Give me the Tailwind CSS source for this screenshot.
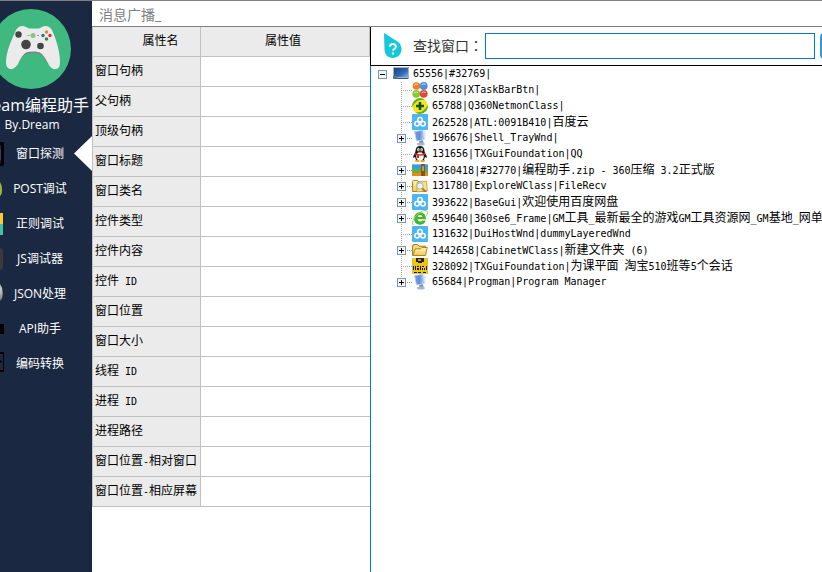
<!DOCTYPE html>
<html lang="zh-CN">
<head>
<meta charset="utf-8">
<meta name="viewport" content="width=device-width, initial-scale=1">
<title>Dream编程助手</title>
<script src="https://cdn.jsdelivr.net/npm/@tailwindcss/browser@4"></script>
</head>
<body class="flex h-screen flex-col overflow-hidden border-t border-[#808080] bg-white font-['Open_Sans','Noto_Sans_CJK_SC',sans-serif] text-black">

<svg class="absolute size-0" aria-hidden="true">
  <defs>
    <linearGradient id="gBlue" x1="0" y1="0" x2="1" y2="1"><stop offset="0" stop-color="#1c3f78"/><stop offset=".6" stop-color="#3468b4"/><stop offset="1" stop-color="#7fb4ea"/></linearGradient>
    <linearGradient id="gPc" x1="0" y1="0" x2="1" y2="0"><stop offset="0" stop-color="#7f9be0"/><stop offset=".5" stop-color="#5f8fe0"/><stop offset="1" stop-color="#b9e0fc"/></linearGradient>
    <linearGradient id="gFold" x1="0" y1="0" x2="0" y2="1"><stop offset="0" stop-color="#fff6c0"/><stop offset="1" stop-color="#f0c850"/></linearGradient>
    <radialGradient id="gBall" cx=".3" cy=".3" r=".8"><stop offset="0" stop-color="#ddd"/><stop offset="1" stop-color="#666"/></radialGradient>
    <symbol id="desktop" viewBox="0 0 16 16"><rect x="0" y="1" width="16" height="12" fill="#9db4cf"/><rect x="1" y="2" width="14" height="9" fill="url(#gBlue)"/><path d="M1 12h14v1H1z" fill="#31557f"/><path d="M0 10h4l1 3H0z" fill="#56768f"/></symbol>
    <symbol id="task" viewBox="0 0 16 16"><circle cx="4.500" cy="4" r="3.800" fill="#ef7d22"/><circle cx="11.700" cy="4" r="3.900" fill="#4c8fe0"/><circle cx="4.300" cy="11.800" r="3.900" fill="#86c832"/><circle cx="11.700" cy="11.800" r="3.900" fill="#e2463a"/><path d="M2 3.500q2-2.500 4-1M9.500 3q2-2 4-.5M2 11q2-2 4-.5M9.500 11q2-2 4-.5" stroke="#fff" stroke-opacity=".7" fill="none"/></symbol>
    <symbol id="plus360" viewBox="0 0 16 16"><circle cx="8" cy="8" r="7.800" fill="#f4e51c"/><path d="M.3 9A7.800 7.800 0 0 1 13 2Q5 0 .3 9zM15.700 7A7.800 7.800 0 0 1 3 14Q11 16 15.700 7z" fill="#55b526"/><path d="M6.700 4h2.600v2.700H12v2.600H9.300V12H6.700V9.300H4V6.700h2.700z" fill="#15551a"/></symbol>
    <symbol id="cloud" viewBox="0 0 16 16"><rect width="16" height="16" rx="1" fill="#4eb5f5"/><g fill="none" stroke="#fff" stroke-width="1.500"><circle cx="8" cy="5.800" r="2.200"/><circle cx="5" cy="9.800" r="2.200"/><circle cx="11" cy="9.800" r="2.200"/></g></symbol>
    <symbol id="computer" viewBox="0 0 16 16"><path d="M2.500 1.500L11 .3l1.500 9.200L4.500 11z" fill="url(#gPc)" stroke="#c5cfe8" stroke-width=".8"/><path d="M11.500.5l2 .8.300 7.700-1.300.8z" fill="#dfe5f2"/><path d="M7 11l4-.8.5 3-4 .6z" fill="#7d90b8"/><ellipse cx="8.800" cy="14" rx="4" ry="1.500" fill="#aab5cc"/></symbol>
    <symbol id="qq" viewBox="0 0 16 16"><path d="M8 0c3 0 4.500 2 4.500 5 0 2 2.500 4 2.500 7l-2-1-1 3H4l-1-3-2 1c0-3 2.500-5 2.500-7C3.500 2 5 0 8 0z" fill="#16181d"/><ellipse cx="8" cy="10.500" rx="3.700" ry="4" fill="#fff"/><ellipse cx="6.400" cy="3.500" rx="1.200" ry="1.600" fill="#fff"/><ellipse cx="9.600" cy="3.500" rx="1.200" ry="1.600" fill="#fff"/><circle cx="6.700" cy="3.700" r=".5"/><circle cx="9.300" cy="3.700" r=".5"/><path d="M5 5.800h6L8 7.300z" fill="#f6a21b"/><path d="M3 7q5 2.500 10 0v1.800q-3 1-6 .8V12H5V9.300L3 8.800z" fill="#e02a20"/><path d="M3 14.300q2.500-1.300 4.500 0L7 16H3.500zM8.500 14.300q2-1.300 4.500 0l-.5 1.700H9z" fill="#f3a01c"/></symbol>
    <symbol id="zip" viewBox="0 0 16 16"><path d="M0 2h16v6H0z" fill="#3a9be0"/><path d="M0 2h16v1H0z" fill="#74c2f0"/><path d="M0 7q6 0 9 1h7v4H0z" fill="#63b52e"/><path d="M0 11h16v3H0z" fill="#f08519"/><path d="M9 2h4v12H9z" fill="#8d5023"/><path d="M10.500 4h1v5h-1z" fill="#f6d77e"/></symbol>
    <symbol id="search" viewBox="0 0 16 16"><path d="M.6 13.500V3.500q0-1 1-1h4.200l1 1.500h7.600v9.500z" fill="url(#gFold)" stroke="#b3811d"/><path d="M5 4.500l9.500-1.500.9 9.500L5 14z" fill="#fbe28a" stroke="#c2962c" stroke-width=".7"/><circle cx="8" cy="8" r="3.200" fill="#e6f4fb" stroke="#a0b2bd"/><path d="M10.300 10.300l3.200 3.400" stroke="#b0702a" stroke-width="1.800"/></symbol>
    <symbol id="ie" viewBox="0 0 16 16"><path fill-rule="evenodd" d="M14 9.300H5.500q.3 2.200 2.600 2.200 1.500 0 2.200-1h3.400Q12.300 14.800 8 14.800 2.200 14.500 2 8.600 2.300 2.600 8 2.300q6 .3 6 7zM5.600 7.100h5q-.4-2-2.500-2-2 0-2.500 2z" fill="#45b52c"/><path d="M1 15Q-1 11 5 5t10-4q1.500 1-.5 4.500" fill="none" stroke="#8ad66c" stroke-width="1"/></symbol>
    <symbol id="folder" viewBox="0 0 16 16"><path d="M.6 13.400V4q0-1.400 1.400-1.400h3.500L7 4.200h6.500V7" fill="#f5d97a" stroke="#a67c14"/><path d="M.8 13.500L3.300 6.800H8.500l1.300-1.300h5.500l-1.800 8z" fill="url(#gFold)" stroke="#a67c14" stroke-width=".9"/></symbol>
    <symbol id="course" viewBox="0 0 16 16"><rect width="16" height="16" fill="#eac51a"/><path d="M4 0h8v4h-2v1H6V4H4z" fill="#2b2408"/><path d="M6 1h3v2H6z" fill="#b89b18"/><path d="M1 8h1v4H1zM3 8h1v4H3zM5 8h2v1H5zM5 10h2v2H5zM8 8h1v4H8zM10 8h2v1h-2zM10 10h1v2h-1zM12 10h1v2h-1zM14 8h1v4h-1zM2 14h3v1H2zM6 14h3v1H6zM11 14h3v1h-3z" fill="#181507"/></symbol>
    <symbol id="boxPlus" viewBox="0 0 9 9"><rect x=".5" y=".5" width="8" height="8" fill="#f5f5f3" stroke="#7b95b5"/><path d="M2 4h5v1H2zM4 2h1v5H4z" fill="#000"/></symbol>
    <symbol id="boxMinus" viewBox="0 0 9 9"><rect x=".5" y=".5" width="8" height="8" fill="#f5f5f3" stroke="#7b95b5"/><path d="M2 4h5v1H2z" fill="#000"/></symbol>
    <symbol id="branch" viewBox="0 0 15 16"><path d="M4.500 0v16M4 8.500h11" stroke="#a0a0a0" stroke-dasharray="1 1"/></symbol>
    <symbol id="branchPlus" viewBox="0 0 15 16"><path d="M4.500 0v16M4 8.500h11" stroke="#a0a0a0" stroke-dasharray="1 1"/><use href="#boxPlus" y="4" width="9" height="9"/></symbol>
    <symbol id="branchEnd" viewBox="0 0 15 16"><path d="M4.500 0v8M4 8.500h11" stroke="#a0a0a0" stroke-dasharray="1 1"/><use href="#boxPlus" y="4" width="9" height="9"/></symbol>
  </defs>
</svg>

<div class="flex min-h-0 flex-1">

  <aside class="w-[92px] shrink-0 overflow-hidden bg-[#1a2941] text-white">
    <svg class="-ml-[9px] mt-2 size-20" viewBox="0 0 80 80" role="img" aria-label="手柄">
      <circle cx="40" cy="40" r="40" fill="#3fb97f"/>
      <path d="M27 50Q31 43 35 41.500q7-2 14 0Q53 43 57 50v5Q53 47 49 45q-7-2-14 0-4 2-8 10z" fill="#7d7f80"/>
      <path d="M25 21Q29 15 35 18l3 1.500h10l3-1.500Q57 15 61 21C65 30 69 42 69 53q0 7-4 7-4 1-7-4-5-10-9-12.500-7-2-14 0-4 2.500-8 11.500-4 6-8 5-4-1-4-7C15 42 21 30 25 21z" fill="#ebebeb"/>
      <circle cx="27.500" cy="25.500" r="3.200" fill="#444"/><circle cx="35" cy="35.500" r="4.800" fill="#444"/><circle cx="49.500" cy="37" r="3.300" fill="#444"/>
      <circle cx="42" cy="26.500" r="2.500" fill="#94bd8c"/><path d="M36.500 26h2v1h-2zM46 26h2v1h-2z" fill="#999"/>
      <circle cx="55.500" cy="23" r="1.700" fill="#d98a28"/><circle cx="52" cy="26.500" r="1.700" fill="#2d6e94"/><circle cx="59" cy="26.500" r="1.700" fill="#c93333"/><circle cx="55.500" cy="30" r="1.700" fill="#3a7d3c"/>
    </svg>
    <h1 class="mt-1 flex justify-end pr-[3px] text-[16px] leading-[24px] whitespace-nowrap">Dream编程助手</h1>
    <p class="pr-7 text-center text-[12px] leading-[16px]">By.Dream</p>

    <nav class="mt-[3px] text-[12px]">
      <button class="relative flex h-[35px] w-full items-center">
        <svg class="h-6 w-1" viewBox="0 0 4 24"><path d="M0 0h2q2 0 2 2v20q0 2-2 2H0v-3h1V3H0z" fill="#000"/><path d="M0 7h1v11H0z" fill="#27446e"/></svg>
        <span class="flex-1 pr-4">窗口探测</span>
        <svg class="absolute right-0 top-0 h-[35px] w-[18px]" viewBox="0 0 18 35"><path d="M18 0v35L0 17.500z" fill="#fff"/></svg>
      </button>
      <button class="flex h-[35px] w-full items-center">
        <svg class="h-6 w-1" viewBox="0 0 4 24"><path d="M0 5q2 3 2 8t-2 6z" fill="#9db63c"/></svg>
        <span class="flex-1 pr-4">POST调试</span>
      </button>
      <button class="flex h-[35px] w-full items-center">
        <svg class="h-6 w-1" viewBox="0 0 4 24"><path d="M0 1h3v11H0z" fill="#fccb33"/><path d="M0 12h3v11H0z" fill="#3cc4a4"/></svg>
        <span class="flex-1 pr-4">正则调试</span>
      </button>
      <button class="flex h-[35px] w-full items-center">
        <svg class="h-6 w-1" viewBox="0 0 4 24"><path d="M0 1q3 0 3 3v16q0 3-3 3z" fill="#3a3a3a"/></svg>
        <span class="flex-1 pr-4">JS调试器</span>
      </button>
      <button class="flex h-[35px] w-full items-center">
        <svg class="h-6 w-1" viewBox="0 0 4 24"><path d="M0 2q3 4 3 9t-3 8z" fill="url(#gBall)"/></svg>
        <span class="flex-1 pr-4">JSON处理</span>
      </button>
      <button class="flex h-[35px] w-full items-center">
        <svg class="h-6 w-1" viewBox="0 0 4 24"><path d="M0 7h4v10H0z" fill="#000"/></svg>
        <span class="flex-1 pr-4">API助手</span>
      </button>
      <button class="flex h-[35px] w-full items-center">
        <svg class="h-6 w-1" viewBox="0 0 4 24"><path d="M0 0h4v20H0v-2h3V2H0zM0 8l2 1.500L0 11z" fill="#000"/></svg>
        <span class="flex-1 pr-4">编码转换</span>
      </button>
    </nav>
  </aside>

  <main class="flex min-w-0 flex-1 flex-col">
    <header class="h-[26px] shrink-0 border-b border-[#808080] pl-[7px] text-[14px] leading-[27px] text-[#808080]">消息广播_</header>

    <div class="flex min-h-0 flex-1">
      <section class="w-[278px] shrink-0">
        <table class="w-full table-fixed border-separate border-spacing-0 border-l border-[#c0c0c0] text-left text-[12px] leading-[16px] [&_th]:h-[30px] [&_th]:border-r [&_th]:border-b [&_th]:border-[#c0c0c0] [&_th]:bg-[#ebebeb] [&_th]:p-0 [&_th]:pb-[2px] [&_th]:pl-[2px] [&_th]:font-normal [&_td]:border-b [&_td]:border-[#c0c0c0] [&_i]:font-['DejaVu_Sans_Mono',monospace] [&_i]:text-[10px] [&_i]:leading-none [&_i]:not-italic">
          <colgroup><col class="w-[108px]"><col></colgroup>
          <thead>
            <tr><th scope="col"><div class="pl-[26px] text-center">属性名</div></th><th scope="col"><div class="pr-[6px] text-center">属性值</div></th></tr>
          </thead>
          <tbody>
            <tr><th scope="row">窗口句柄</th><td></td></tr>
            <tr><th scope="row">父句柄</th><td></td></tr>
            <tr><th scope="row">顶级句柄</th><td></td></tr>
            <tr><th scope="row">窗口标题</th><td></td></tr>
            <tr><th scope="row">窗口类名</th><td></td></tr>
            <tr><th scope="row">控件类型</th><td></td></tr>
            <tr><th scope="row">控件内容</th><td></td></tr>
            <tr><th scope="row">控件<i> ID</i></th><td></td></tr>
            <tr><th scope="row">窗口位置</th><td></td></tr>
            <tr><th scope="row">窗口大小</th><td></td></tr>
            <tr><th scope="row">线程<i> ID</i></th><td></td></tr>
            <tr><th scope="row">进程<i> ID</i></th><td></td></tr>
            <tr><th scope="row">进程路径</th><td></td></tr>
            <tr><th scope="row">窗口位置<i>-</i>相对窗口</th><td></td></tr>
            <tr><th scope="row">窗口位置<i>-</i>相应屏幕</th><td></td></tr>
          </tbody>
        </table>
      </section>

      <section class="flex min-w-0 flex-1 flex-col">
        <form class="flex h-[39px] shrink-0 items-center overflow-hidden border-b border-l border-black pl-3">
          <svg class="h-[26px] w-[19px] shrink-0" viewBox="0 0 19 26"><path d="M1 0L14.500 8.500Q19 12 18.500 17 17.500 24.500 10 25 2.500 25 1.500 17z" fill="#12c8da"/><path d="M6.800 13.800q.2-2.800 3.100-2.800t3 2.600q0 1.400-1.500 2.200-1.300.7-1.300 2" fill="none" stroke="#fff" stroke-width="1.900"/><circle cx="10" cy="20.500" r="1.200" fill="#fff"/></svg>
          <label for="find" class="ml-[11px] shrink-0 pb-[2px] text-[14px] leading-[20px] text-[#333]">查找窗口<span lang="zh-TW" class="font-['Noto_Sans_CJK_TC',sans-serif]">：</span></label>
          <input id="find" type="text" class="ml-[2px] h-[26px] min-w-0 flex-1 border border-[#0078d7] bg-white px-1 text-[14px] outline-none">
          <button type="button" aria-label="查找" class="-mr-[58px] ml-[5px] h-[26px] w-[60px] shrink-0 rounded-sm bg-[#3498db]"></button>
        </form>

        <div class="min-h-0 flex-1 overflow-hidden border-l border-[#0078d7] pl-[7px] font-['DejaVu_Sans_Mono','Noto_Sans_CJK_SC',monospace] text-[10px] leading-[16px] whitespace-nowrap [&_b]:font-['Noto_Sans_CJK_SC',sans-serif] [&_b]:text-[12px] [&_b]:font-normal">
          <div class="flex h-4 items-center"><button aria-label="收起" class="size-[9px]"><svg class="size-[9px]"><use href="#boxMinus"/></svg></button><svg class="ml-[6px] mr-1 size-4"><use href="#desktop"/></svg><span>65556|#32769|</span></div>
          <ul class="ml-[19px] [&>li]:flex [&>li]:h-4 [&>li]:items-center [&_svg]:shrink-0">
            <li><svg class="h-4 w-[15px]"><use href="#branch"/></svg><svg class="mr-1 size-4"><use href="#task"/></svg><span>65828|XTaskBarBtn|</span></li>
            <li><svg class="h-4 w-[15px]"><use href="#branch"/></svg><svg class="mr-1 size-4"><use href="#plus360"/></svg><span>65788|Q360NetmonClass|</span></li>
            <li><svg class="h-4 w-[15px]"><use href="#branch"/></svg><svg class="mr-1 size-4"><use href="#cloud"/></svg><span>262528|ATL:0091B410|<b>百度云</b></span></li>
            <li><button aria-label="展开"><svg class="h-4 w-[15px]"><use href="#branchPlus"/></svg></button><svg class="mr-1 size-4"><use href="#computer"/></svg><span>196676|Shell_TrayWnd|</span></li>
            <li><svg class="h-4 w-[15px]"><use href="#branch"/></svg><svg class="mr-1 size-4"><use href="#qq"/></svg><span>131656|TXGuiFoundation|QQ</span></li>
            <li><button aria-label="展开"><svg class="h-4 w-[15px]"><use href="#branchPlus"/></svg></button><svg class="mr-1 size-4"><use href="#zip"/></svg><span>2360418|#32770|<b>编程助手</b>.zip - 360<b>压缩</b> 3.2<b>正式版</b></span></li>
            <li><button aria-label="展开"><svg class="h-4 w-[15px]"><use href="#branchPlus"/></svg></button><svg class="mr-1 size-4"><use href="#search"/></svg><span>131780|ExploreWClass|FileRecv</span></li>
            <li><button aria-label="展开"><svg class="h-4 w-[15px]"><use href="#branchPlus"/></svg></button><svg class="mr-1 size-4"><use href="#cloud"/></svg><span>393622|BaseGui|<b>欢迎使用百度网盘</b></span></li>
            <li><button aria-label="展开"><svg class="h-4 w-[15px]"><use href="#branchPlus"/></svg></button><svg class="mr-1 size-4"><use href="#ie"/></svg><span>459640|360se6_Frame|GM<b>工具</b>_<b>最新最全的游戏</b>GM<b>工具资源网</b>_GM<b>基地</b>_<b>网单</b></span></li>
            <li><svg class="h-4 w-[15px]"><use href="#branch"/></svg><svg class="mr-1 size-4"><use href="#cloud"/></svg><span>131632|DuiHostWnd|dummyLayeredWnd</span></li>
            <li><button aria-label="展开"><svg class="h-4 w-[15px]"><use href="#branchPlus"/></svg></button><svg class="mr-1 size-4"><use href="#folder"/></svg><span>1442658|CabinetWClass|<b>新建文件夹</b> (6)</span></li>
            <li><svg class="h-4 w-[15px]"><use href="#branch"/></svg><svg class="mr-1 size-4"><use href="#course"/></svg><span>328092|TXGuiFoundation|<b>为课平面</b> <b>淘宝</b>510<b>班等</b>5<b>个会话</b></span></li>
            <li><button aria-label="展开"><svg class="h-4 w-[15px]"><use href="#branchEnd"/></svg></button><svg class="mr-1 size-4"><use href="#computer"/></svg><span>65684|Progman|Program Manager</span></li>
          </ul>
        </div>
      </section>
    </div>
  </main>
</div>
</body>
</html>
